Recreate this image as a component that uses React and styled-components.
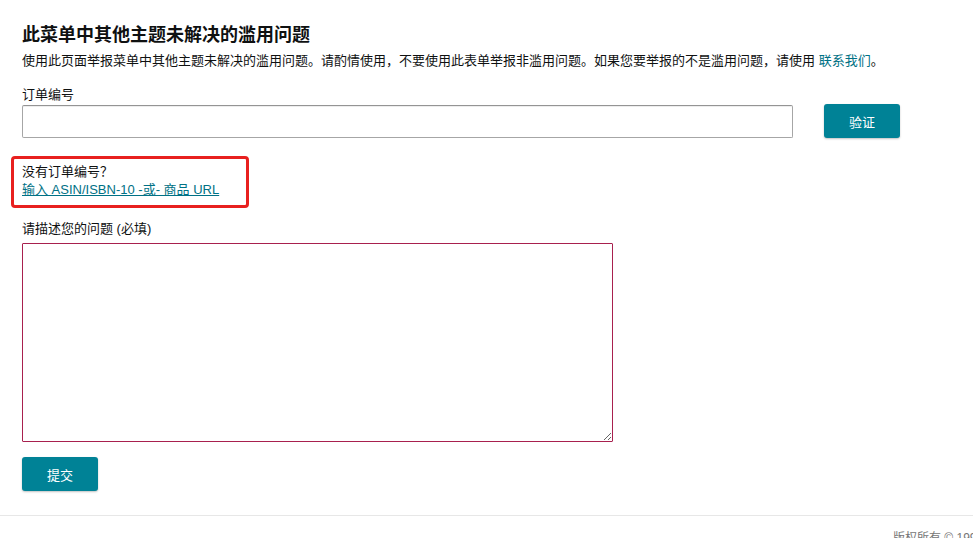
import React from 'react'
import styled, { createGlobalStyle } from 'styled-components'

const GlobalStyle = createGlobalStyle`
  html, body {
    margin: 0;
    padding: 0;
    background: #fff;
    overflow: hidden;
  }
  body {
    font-family: "Liberation Sans", Arial, "Noto Sans CJK SC", sans-serif;
    color: #0f1111;
  }
`

const Page = styled.div`
  width: 973px;
  height: 538px;
  overflow: hidden;
  display: flex;
  flex-direction: column;
`

const Main = styled.div`
  padding: 23px 0 0 22px;
  display: flex;
  flex-direction: column;
`

const Title = styled.h1`
  margin: 0;
  font-size: 18px;
  line-height: 24px;
  font-weight: 700;
  color: #0f1111;
`

const Intro = styled.p`
  margin: 5px 0 0;
  font-size: 13px;
  line-height: 18px;
  color: #0f1111;
  white-space: nowrap;
`

const Link = styled.a`
  color: #007185;
  text-decoration: ${p => (p.$underline ? 'underline' : 'none')};
  cursor: pointer;
`

const Label = styled.label`
  display: block;
  font-size: 13px;
  line-height: 18px;
  color: #0f1111;
  margin-top: ${p => p.$top || 0}px;
`

const OrderRow = styled.div`
  display: flex;
  align-items: center;
  gap: 31px;
`

const TextInput = styled.input`
  width: 771px;
  height: 33px;
  box-sizing: border-box;
  border: 1px solid #a6a6a6;
  border-top-color: #949494;
  border-radius: 2px;
  box-shadow: 0 1px 0 rgba(255, 255, 255, 0.5), inset 0 1px 0 rgba(0, 0, 0, 0.07);
  padding: 0 7px;
  font-size: 13px;
  outline: none;
`

const Button = styled.button`
  width: ${p => p.$w || 76}px;
  height: 34px;
  box-sizing: border-box;
  border: none;
  border-radius: 3px;
  background: #008296;
  color: #fff;
  font-size: 13px;
  font-family: inherit;
  box-shadow: 0 1px 2px rgba(15, 17, 17, 0.25);
  cursor: pointer;
`

const Highlight = styled.div`
  margin: 18px 0 0 -11px;
  width: 238px;
  box-sizing: border-box;
  border: 3px solid #e8201f;
  border-radius: 4px;
  padding: 4px 0 6px 8px;
  font-size: 13px;
  line-height: 18px;
`

const Plain = styled.div`
  color: #0f1111;
`

const TextArea = styled.textarea`
  margin-top: 5px;
  width: 591px;
  height: 199px;
  box-sizing: border-box;
  border: 1px solid #a8204e;
  border-radius: 1px;
  padding: 6px;
  font-size: 13px;
  outline: none;
`

const SubmitWrap = styled.div`
  margin-top: 15px;
`

const Footer = styled.footer`
  margin-top: 24px;
  border-top: 1px solid #e7e7e7;
  padding: 12px 0 0 893px;
  font-size: 12px;
  color: #767676;
  white-space: nowrap;
`

export default function App() {
  return (
    <Page>
      <GlobalStyle />
      <Main>
        <Title>此菜单中其他主题未解决的滥用问题</Title>
        <Intro>
          使用此页面举报菜单中其他主题未解决的滥用问题。请酌情使用，不要使用此表单举报非滥用问题。如果您要举报的不是滥用问题，请使用 <Link>联系我们</Link>。
        </Intro>
        <Label $top={16}>订单编号</Label>
        <OrderRow>
          <TextInput type="text" />
          <Button $w={76}>验证</Button>
        </OrderRow>
        <Highlight>
          <Plain>没有订单编号？</Plain>
          <Link $underline>输入 ASIN/ISBN-10 -或- 商品 URL</Link>
        </Highlight>
        <Label $top={12}>请描述您的问题 (必填)</Label>
        <TextArea />
        <SubmitWrap>
          <Button $w={76}>提交</Button>
        </SubmitWrap>
      </Main>
      <Footer>版权所有 © 1996-2024, Amazon.com, Inc. 或其附属公司</Footer>
    </Page>
  )
}
